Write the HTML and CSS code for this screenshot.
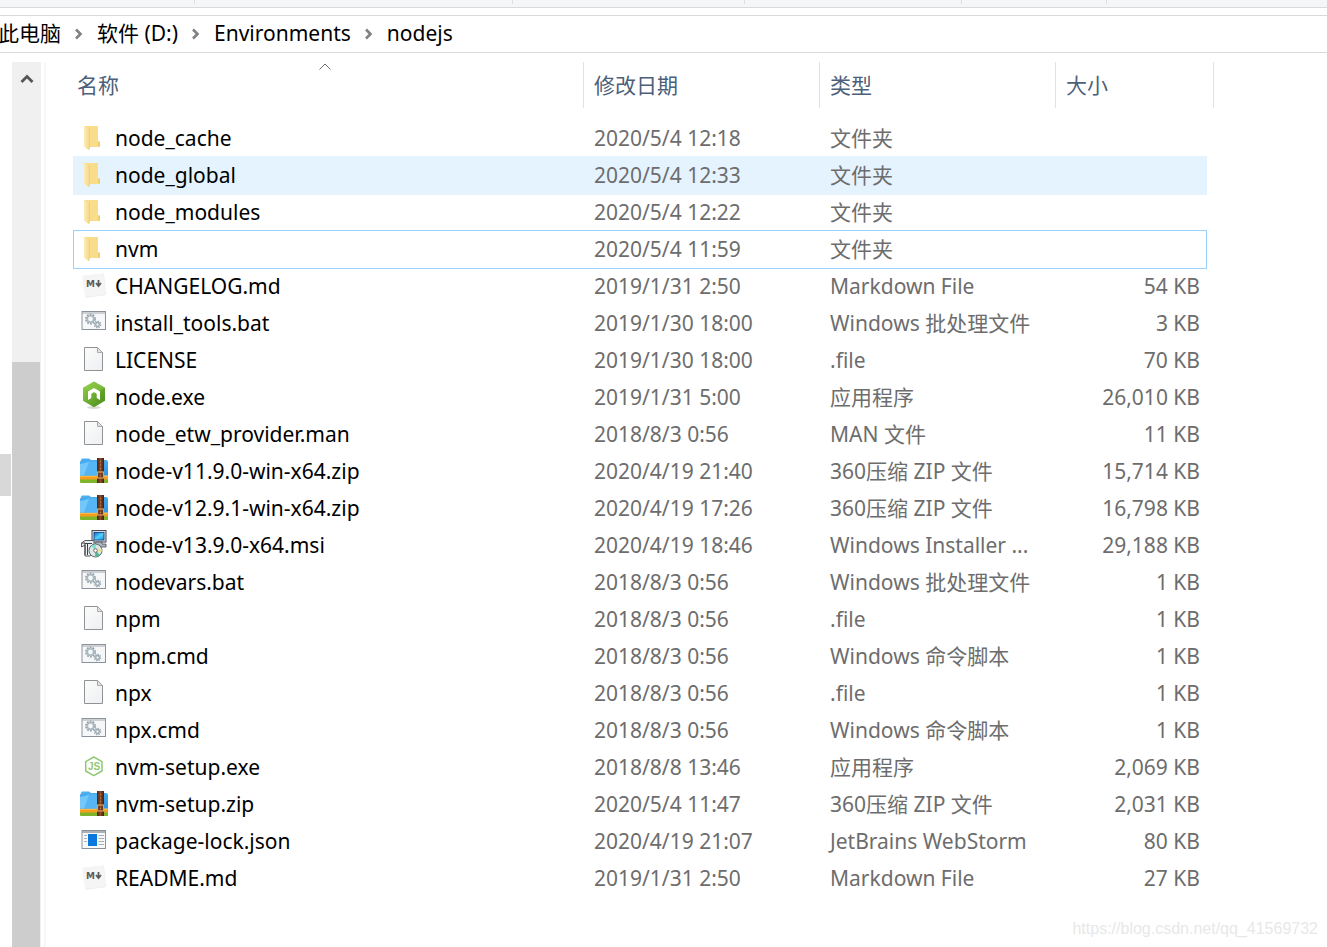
FILE: index.html
```html
<!DOCTYPE html>
<html lang="zh-CN">
<head>
<meta charset="utf-8">
<title>nodejs</title>
<meta name="viewport" content="width=device-width, initial-scale=1">
<link rel="stylesheet" href="styles.css">
</head>
<body>
<svg class="sprite" aria-hidden="true">
  <defs>
    <linearGradient id="g-page" x1="0" y1="0" x2="1" y2="1"><stop offset="0" stop-color="#fcfcfc"/><stop offset="1" stop-color="#eeeff1"/></linearGradient>
    <linearGradient id="g-fold" x1="0" y1="0" x2="1" y2="0"><stop offset="0" stop-color="#fdedb4"/><stop offset="1" stop-color="#f4d88a"/></linearGradient>
    <linearGradient id="g-green" x1="0" y1="0" x2="1" y2="1"><stop offset="0" stop-color="#93cf4a"/><stop offset="1" stop-color="#468a1a"/></linearGradient>
    <linearGradient id="g-blue" x1="0" y1="0" x2="0" y2="1"><stop offset="0" stop-color="#4db0f2"/><stop offset="1" stop-color="#2e93e6"/></linearGradient>
    <linearGradient id="g-strap" x1="0" y1="0" x2="1" y2="0"><stop offset="0" stop-color="#4c2415"/><stop offset="0.5" stop-color="#8a4a2b"/><stop offset="1" stop-color="#3e1c10"/></linearGradient>
    <linearGradient id="g-screen" x1="0" y1="0" x2="1" y2="1"><stop offset="0" stop-color="#0b5fd0"/><stop offset="0.5" stop-color="#4fd5fa"/><stop offset="1" stop-color="#1a8fe0"/></linearGradient>
  </defs>
  <symbol id="folder" viewBox="0 0 28 27">
    <path d="M4 2H18V17.500H20V22.500L19 23H6Z" fill="#f9dd8b"/>
    <path d="M18 17.500H20V22.500L18 23Z" fill="#efcf74"/>
    <path d="M4 2L9.500 4.500V24L8.500 26L4 22.500Z" fill="url(#g-fold)"/>
    <path d="M9.500 4.500V24L8.500 26" fill="none" stroke="#e9c96c" stroke-width=".6"/>
  </symbol>
  <symbol id="markdown" viewBox="0 0 28 27">
    <path d="M2.500 4L24 1.500L26 23L5.500 26Z" fill="#ededed"/>
    <path d="M3 3.500L23.500 1.500L25.300 22.500L5.500 25Z" fill="#f5f5f5"/>
    <path d="M18.500 8V13M16 11L18.500 14L21 11" fill="none" stroke="#5c5c5c" stroke-width="1.800"/>
  </symbol>
  <symbol id="batch" viewBox="0 0 28 27">
    <rect x="2" y="2.500" width="23.500" height="18" fill="#f6f7f8" stroke="#8c9299"/>
    <path d="M2 4H25.500" stroke="#a3a8ad" stroke-width="1"/>
    <g fill="none" stroke="#91a0aa">
      <circle cx="10.500" cy="10" r="4.600" stroke-width="1.700" stroke-dasharray="1.800 1.100"/>
      <circle cx="10.500" cy="10" r="3.200" stroke-width="1.600" stroke="#a9b7c0"/>
      <circle cx="17.500" cy="15.500" r="3" stroke-width="1.500" stroke-dasharray="1.300 1"/>
      <circle cx="17.500" cy="15.500" r="1.800" stroke-width="1.200"/>
    </g>
  </symbol>
  <symbol id="page" viewBox="0 0 28 27">
    <path d="M4.500 1.500H17.500L22.500 6.500V24.500H4.500Z" fill="url(#g-page)" stroke="#8f9396"/>
    <path d="M17.500 1.500V6.500H22.500Z" fill="#dfe1e3" stroke="#9a9d9f" stroke-width=".8"/>
  </symbol>
  <symbol id="node" viewBox="0 0 28 27" overflow="visible">
    <ellipse cx="14" cy="24.500" rx="7" ry="1.500" fill="#d9dcd6"/>
    <path d="M14 -1.500L25 4.800V17.800L14 24.300L3 17.800V4.800Z" fill="url(#g-green)"/>
    <path d="M14 -1.500L25 4.800L14 11L3 4.800Z" fill="#9bd44f" opacity=".35"/>
    <path d="M8 17V8.500L14 5L20 8.500V17L16.700 15V10.700L14 9L11.300 10.700V15Z" fill="#fff"/>
  </symbol>
  <symbol id="zip" viewBox="0 0 28 27">
    <path d="M0 21H28V25.500Q28 26 27 26H1Q0 26 0 25Z" fill="#7db52b"/>
    <path d="M0 18H28V22.500H0Z" fill="#f79d1e"/>
    <path d="M0 18H28V19.500H0Z" fill="#ffd067"/>
    <path d="M0 5L2 1.500H9L11 3H26Q28 3 28 5V18.500H0Z" fill="url(#g-blue)"/>
    <path d="M0 7Q6 6 8 4.500H17V18.500H0Z" fill="#55b5f5"/>
    <path d="M9 4.500L4 18.500H0V7Q6 6 9 4.500Z" fill="#8ad2fc" opacity=".6"/>
    <rect x="17" y="1" width="7" height="25" fill="url(#g-strap)"/>
    <rect x="17.500" y="15" width="6" height="6" fill="none" stroke="#d9a35c" stroke-width="1.200"/>
    <path d="M20.500 4V19" stroke="#c98545" stroke-width="1" stroke-dasharray="1 2.500"/>
  </symbol>
  <symbol id="installer" viewBox="0 0 28 27" overflow="visible">
    <rect x="12" y="-.5" width="14" height="11.500" fill="#d6dbe4" stroke="#454a55"/>
    <rect x="14" y="1.500" width="10" height="7.500" fill="url(#g-screen)" stroke="#143a7a" stroke-width=".8"/>
    <path d="M16 11H22V13H26V16H14Z" fill="#aeb3bd" stroke="#4b4f59" stroke-width=".8"/>
    <path d="M1.500 12L5 9.500H14V22L10 25H5V14L1.500 16Z" fill="#eceef0" stroke="#565b62"/>
    <path d="M5 12.500H12M7.500 12.500V24M1.500 12H5V24" fill="none" stroke="#3d4147"/>
    <circle cx="15.500" cy="19.500" r="6.500" fill="#dfe6e6" stroke="#5e7070"/>
    <path d="M15.500 19.500L11 15A6.500 6.500 0 0 1 16 13.500Z" fill="#7fe0d2"/>
    <path d="M15.500 19.500L20 24A6.500 6.500 0 0 1 15 25.500Z" fill="#55b98d"/>
    <path d="M15.500 19.500L21.500 17.500V21Z" fill="#f2e38b"/>
    <circle cx="15.500" cy="19.500" r="1.800" fill="#fff" stroke="#555" stroke-width=".8"/>
  </symbol>
  <symbol id="setup" viewBox="0 0 28 27">
    <path d="M13.800 4L22 8.700V18L13.800 22.600L5.700 18V8.700Z" fill="#fff" stroke="#8fc975" stroke-width="1.500" stroke-linejoin="round"/>
  </symbol>
  <symbol id="json" viewBox="0 0 28 27">
    <rect x="2" y="3.500" width="23.500" height="18" fill="#f7f8f9" stroke="#8c9299"/>
    <path d="M2 5H25.500" stroke="#9a9fa5" stroke-width="1.600"/>
    <rect x="8" y="7" width="9" height="12" fill="#0a77dc"/>
    <path d="M4 8.500H7M4 11.500H7M4 14.500H7M18.500 8.500H24M18.500 11.500H24M18.500 14.500H24M18.500 17.500H24" stroke="#a9b0b7" stroke-width="1"/>
  </symbol>
  <symbol id="chevron" viewBox="0 0 8 12">
    <path d="M1 1.500L5.500 6L1 10.500" fill="none" stroke="#808080" stroke-width="2.600"/>
  </symbol>
</svg>

<div class="window">
  <div class="ribbon"><i></i><i></i><i></i><i></i><i></i></div>
  <nav class="address" aria-label="路径">
    <a href="#">此电脑</a><svg class="chevron"><use href="#chevron"/></svg>
    <a href="#">软件 (D:)</a><svg class="chevron"><use href="#chevron"/></svg>
    <a href="#">Environments</a><svg class="chevron"><use href="#chevron"/></svg>
    <a href="#">nodejs</a>
  </nav>
  <div class="body">
    <div class="tree"><div class="tree-selection"></div></div>
    <div class="scrollbar">
      <button class="scroll-up" aria-label="向上滚动"><svg viewBox="0 0 14 10"><path d="M1.500 8L7 2.500L12.500 8" fill="none" stroke="#555" stroke-width="2.800"/></svg></button>
      <div class="thumb"></div>
    </div>
    <main class="pane">
      <table class="files">
        <colgroup><col><col class="c-date"><col class="c-type"><col class="c-size"><col class="c-edge"></colgroup>
        <thead>
          <tr>
            <th aria-sort="ascending"><button>名称</button><svg class="sort" viewBox="0 0 12 7"><path d="M.5 6.500L6 1L11.500 6.500" fill="none" stroke="#6b6b6b"/></svg></th>
            <th><button>修改日期</button></th>
            <th><button>类型</button></th>
            <th colspan="2"><button>大小</button></th>
          </tr>
        </thead>
        <tbody>
          <tr><td><span class="name"><svg><use href="#folder"/></svg>node_cache</span></td><td>2020/5/4 12:18</td><td>文件夹</td><td></td></tr>
          <tr class="hovered"><td><span class="name"><svg><use href="#folder"/></svg>node_global</span></td><td>2020/5/4 12:33</td><td>文件夹</td><td></td></tr>
          <tr><td><span class="name"><svg><use href="#folder"/></svg>node_modules</span></td><td>2020/5/4 12:22</td><td>文件夹</td><td></td></tr>
          <tr class="focused"><td><span class="name"><svg><use href="#folder"/></svg>nvm</span></td><td>2020/5/4 11:59</td><td>文件夹</td><td></td></tr>
          <tr><td><span class="name"><svg><use href="#markdown"/><text x="6" y="15" class="md-letter">M</text></svg>CHANGELOG.md</span></td><td>2019/1/31 2:50</td><td>Markdown File</td><td>54 KB</td></tr>
          <tr><td><span class="name"><svg><use href="#batch"/></svg>install_tools.bat</span></td><td>2019/1/30 18:00</td><td>Windows 批处理文件</td><td>3 KB</td></tr>
          <tr><td><span class="name"><svg><use href="#page"/></svg>LICENSE</span></td><td>2019/1/30 18:00</td><td>.file</td><td>70 KB</td></tr>
          <tr><td><span class="name"><svg><use href="#node"/></svg>node.exe</span></td><td>2019/1/31 5:00</td><td>应用程序</td><td>26,010 KB</td></tr>
          <tr><td><span class="name"><svg><use href="#page"/></svg>node_etw_provider.man</span></td><td>2018/8/3 0:56</td><td>MAN 文件</td><td>11 KB</td></tr>
          <tr><td><span class="name"><svg><use href="#zip"/></svg>node-v11.9.0-win-x64.zip</span></td><td>2020/4/19 21:40</td><td>360压缩 ZIP 文件</td><td>15,714 KB</td></tr>
          <tr><td><span class="name"><svg><use href="#zip"/></svg>node-v12.9.1-win-x64.zip</span></td><td>2020/4/19 17:26</td><td>360压缩 ZIP 文件</td><td>16,798 KB</td></tr>
          <tr><td><span class="name"><svg><use href="#installer"/></svg>node-v13.9.0-x64.msi</span></td><td>2020/4/19 18:46</td><td>Windows Installer ...</td><td>29,188 KB</td></tr>
          <tr><td><span class="name"><svg><use href="#batch"/></svg>nodevars.bat</span></td><td>2018/8/3 0:56</td><td>Windows 批处理文件</td><td>1 KB</td></tr>
          <tr><td><span class="name"><svg><use href="#page"/></svg>npm</span></td><td>2018/8/3 0:56</td><td>.file</td><td>1 KB</td></tr>
          <tr><td><span class="name"><svg><use href="#batch"/></svg>npm.cmd</span></td><td>2018/8/3 0:56</td><td>Windows 命令脚本</td><td>1 KB</td></tr>
          <tr><td><span class="name"><svg><use href="#page"/></svg>npx</span></td><td>2018/8/3 0:56</td><td>.file</td><td>1 KB</td></tr>
          <tr><td><span class="name"><svg><use href="#batch"/></svg>npx.cmd</span></td><td>2018/8/3 0:56</td><td>Windows 命令脚本</td><td>1 KB</td></tr>
          <tr><td><span class="name"><svg><use href="#setup"/><text x="8" y="17" class="js-letter">JS</text></svg>nvm-setup.exe</span></td><td>2018/8/8 13:46</td><td>应用程序</td><td>2,069 KB</td></tr>
          <tr><td><span class="name"><svg><use href="#zip"/></svg>nvm-setup.zip</span></td><td>2020/5/4 11:47</td><td>360压缩 ZIP 文件</td><td>2,031 KB</td></tr>
          <tr><td><span class="name"><svg><use href="#json"/></svg>package-lock.json</span></td><td>2020/4/19 21:07</td><td>JetBrains WebStorm</td><td>80 KB</td></tr>
          <tr><td><span class="name"><svg><use href="#markdown"/><text x="6" y="15" class="md-letter">M</text></svg>README.md</span></td><td>2019/1/31 2:50</td><td>Markdown File</td><td>27 KB</td></tr>
        </tbody>
      </table>
    </main>
  </div>
  <div class="watermark">https://blog.csdn.net/qq_41569732</div>
</div>
</body>
</html>
```
FILE: styles.css
```css
* { box-sizing: border-box; }

body {
  margin: 0;
  background: #fff;
  color: #000;
  font: 21px/28px "Noto Sans", "Noto Sans CJK SC", sans-serif;
}

.sprite { position: absolute; width: 0; height: 0; }

.window {
  position: relative;
  display: flex;
  flex-direction: column;
  min-height: 100vh;
  overflow: hidden;
}

.ribbon {
  display: grid;
  grid-template-columns: 195fr 318fr 232fr 217fr 145fr 220fr;
  height: 8px;
  background: #f4f6f8;
  border-bottom: 1px solid #dadada;
}
.ribbon i { height: 4px; border-right: 1px solid #dcdfe2; }

.address {
  display: flex;
  align-items: center;
  height: 38px;
  margin-top: 7px;
  padding-bottom: 2px;
  border: solid #d9d9d9;
  border-width: 1px 0;
  white-space: nowrap;
}
.address a { color: inherit; text-decoration: none; }
.address a:first-child { margin-left: -2px; }
.chevron { flex: none; width: 8px; height: 12px; margin: 2px 14px 0; }

.body { display: flex; flex: 1; padding-top: 9px; }

.tree { width: 12px; padding-top: 392px; }
.tree-selection { width: 11px; height: 42px; background: #d8d8d8; }

.scrollbar {
  display: flex;
  flex-direction: column;
  width: 29px;
  background: #f0f0f0;
}
.scroll-up {
  display: grid;
  place-items: center;
  width: 29px;
  height: 34px;
  padding: 0;
  border: 0;
  background: none;
}
.scroll-up svg { width: 14px; height: 10px; }
.thumb { flex: 1; width: 28px; margin-top: 266px; background: #cdcdcd; }

.pane {
  flex: 1;
  min-width: 0;
  margin-left: 3px;
  padding: 0 113px 0 27px;
  border-left: 2px solid #f7f7f7;
}

.files {
  width: 100%;
  table-layout: fixed;
  border-collapse: separate;
  border-spacing: 0;
}
.c-date, .c-type { width: 236px; }
.c-size { width: 151px; }
.c-edge { width: 7px; }

.files th {
  position: relative;
  height: 46px;
  padding: 0 0 0 10px;
  border-right: 1px solid #e2e2e2;
  text-align: left;
}
.files th:first-child { padding-left: 4px; }
.files th button {
  padding: 0;
  border: 0;
  background: none;
  color: #4c607a;
  font: inherit;
  font-weight: 400;
}
.sort { position: absolute; top: 1px; left: 50%; width: 12px; height: 7px; margin-left: -9px; }

.files tbody::before { content: ""; display: block; height: 11px; }
.files tbody tr { position: relative; isolation: isolate; }
.files td {
  height: 37px;
  padding: 0 0 0 10px;
  color: #6d6d6d;
  white-space: nowrap;
}
.files td:first-child { padding-left: 7px; color: #000; }
.files td:nth-child(4) { padding: 0 7px 0 0; text-align: right; }

.name { display: flex; align-items: center; gap: 7px; }
.name svg { flex: none; width: 28px; height: 27px; overflow: visible; }

.hovered::after,
.focused::after {
  content: "";
  position: absolute;
  z-index: -1;
  inset: 0 7px -2px 0;
}
.hovered::after { background: #e5f3ff; }
.focused::after { border: 1px solid #99d1ff; }

.md-letter { font: bold 9px "DejaVu Sans", sans-serif; fill: #5c5c5c; }
.js-letter { font: bold 10px "Liberation Sans", sans-serif; fill: #8fc975; }

.watermark {
  position: absolute;
  right: 9px;
  bottom: 6px;
  color: #e8e8e8;
  font: 16px/24px "Liberation Sans", Arial, sans-serif;
}
```
